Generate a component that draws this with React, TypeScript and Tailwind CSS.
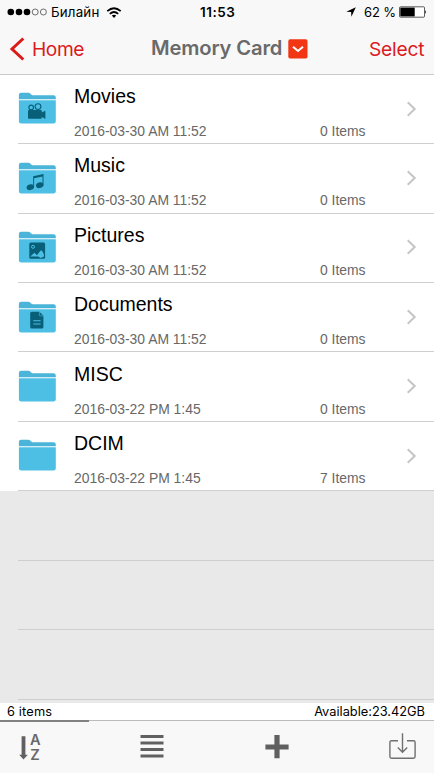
import React from 'react';

type Kind = 'movie' | 'music' | 'picture' | 'document' | 'plain';

interface Entry {
  name: string;
  date: string;
  count: string;
  kind: Kind;
}

const entries: Entry[] = [
  { name: 'Movies', date: '2016-03-30 AM 11:52', count: '0 Items', kind: 'movie' },
  { name: 'Music', date: '2016-03-30 AM 11:52', count: '0 Items', kind: 'music' },
  { name: 'Pictures', date: '2016-03-30 AM 11:52', count: '0 Items', kind: 'picture' },
  { name: 'Documents', date: '2016-03-30 AM 11:52', count: '0 Items', kind: 'document' },
  { name: 'MISC', date: '2016-03-22 PM 1:45', count: '0 Items', kind: 'plain' },
  { name: 'DCIM', date: '2016-03-22 PM 1:45', count: '7 Items', kind: 'plain' },
];

function Glyph({ kind }: { kind: Kind }) {
  const dark = '#075f78';
  if (kind === 'movie') {
    return (
      <g>
        <circle cx="13.2" cy="15.4" r="2.3" fill="none" stroke={dark} strokeWidth="1.1" />
        <circle cx="20" cy="14.6" r="2.9" fill="none" stroke={dark} strokeWidth="1.1" />
        <rect x="10" y="18" width="13.8" height="8.8" rx="1" fill={dark} />
        <path d="M23 20.8 L27.4 18.8 V27 L23 24.6 Z" fill={dark} />
      </g>
    );
  }
  if (kind === 'music') {
    return (
      <g fill={dark}>
        <ellipse cx="12.3" cy="25.2" rx="3.8" ry="2.8" transform="rotate(-20 12.3 25.2)" />
        <ellipse cx="21.7" cy="23.2" rx="3.8" ry="2.8" transform="rotate(-20 21.7 23.2)" />
        <path d="M15.2 25 V14.2 L25.5 12 V23.2 H24.5 V14.4 L16.1 16.2 V25 Z" />
      </g>
    );
  }
  if (kind === 'picture') {
    return (
      <g>
        <rect x="11.3" y="11.5" width="15.8" height="16.2" rx="1.5" fill={dark} />
        <circle cx="15" cy="15.8" r="1.5" fill="none" stroke="#4ebfe4" strokeWidth="1" />
        <path d="M12.2 25.6 L16.4 21.8 L19 24.2 L22.4 19.8 Q24 18.6 24.7 21 Q26 22 26 25.6 L22.7 27 L20.3 25.6 Z" fill="#4ebfe4" />
      </g>
    );
  }
  if (kind === 'document') {
    return (
      <g>
        <path d="M13.7 10.8 H21.4 L25.4 14.8 V26 Q25.4 27.5 23.9 27.5 H13.7 Q12.2 27.5 12.2 26 V12.3 Q12.2 10.8 13.7 10.8 Z" fill={dark} />
        <path d="M21.4 11 V14.8 H25.2" fill="none" stroke="#4ebfe4" strokeWidth="0.6" />
        <path d="M15.3 19.7 H22.6 M15.3 23 H22.6" stroke="#4ebfe4" strokeWidth="1.1" />
      </g>
    );
  }
  return null;
}

function Folder({ kind }: { kind: Kind }) {
  return (
    <svg className="h-8 w-[38px] shrink-0" viewBox="0 0 38 32">
      <path d="M0.9 7.2 V2.8 Q0.9 0.7 3 0.7 H10.5 Q12 0.7 13 2.2 Q13.7 3.2 15 3.2 H35.5 Q37.8 3.2 37.8 5.5 V7.2 Z" fill="#4bb5d9" />
      <path d="M0.9 8.2 H37.8 V29 Q37.8 31.5 35.3 31.5 H3.4 Q0.9 31.5 0.9 29 Z" fill="#4ebfe4" />
      <Glyph kind={kind} />
    </svg>
  );
}

function Row({ entry }: { entry: Entry }) {
  return (
    <li className="flex h-[69.45px] pl-[18px]">
      <div className="flex flex-1 border-b border-[#cfcfcf]">
        <div className="pt-[17.6px]"><Folder kind={entry.kind} /></div>
        <div className="ml-[18px] w-[246px]">
          <div className="mt-[9.2px] text-[19.5px] leading-6 text-black">{entry.name}</div>
          <div className="mt-[15.1px] text-[13.9px] leading-4 text-[#686868]">{entry.date}</div>
        </div>
        <div className="mt-[48.3px] w-[83px] text-[13.9px] leading-4 text-[#686868]">{entry.count}</div>
        <svg className="mt-[24.8px] h-[18px] w-[14px]" viewBox="0 0 14 18">
          <path d="M4.7 2.2 L11.7 9 L4.7 15.8" fill="none" stroke="#c5c5c5" strokeWidth="2" />
        </svg>
      </div>
    </li>
  );
}

function StatusBar() {
  return (
    <div className="flex h-6 items-center text-black">
      <svg className="ml-[7px] h-3 w-10" viewBox="0 0 40 12">
        <circle cx="3.8" cy="6" r="3.3" />
        <circle cx="12" cy="6" r="3.3" />
        <circle cx="20" cy="6" r="3.3" />
        <circle cx="28.2" cy="6" r="3" fill="none" stroke="#333" strokeWidth="0.7" />
        <circle cx="36.4" cy="6" r="3" fill="none" stroke="#333" strokeWidth="0.7" />
      </svg>
      <div className="ml-[4px] w-[55px] whitespace-nowrap pt-px text-[13.3px] tracking-[0.2px]">Билайн</div>
      <svg className="h-[11px] w-4" viewBox="0 0 16 11">
        <g fill="none" stroke="#000" strokeWidth="1.8">
          <path d="M1.3 4.2 Q8 -1.8 14.7 4.2" />
          <path d="M3.8 6.9 Q8 3.1 12.2 6.9" />
        </g>
        <path d="M5.8 8.6 Q8 6.8 10.2 8.6 L8 10.9 Z" />
      </svg>
      <div className="ml-[78px] w-[146px] pt-px text-[13.5px] font-semibold tracking-[0.5px]">11:53</div>
      <svg className="h-[10px] w-[10px]" viewBox="0 0 10 10">
        <path d="M9.8 0.3 L5.4 9.8 L5.1 5 L0.3 4.8 Z" />
      </svg>
      <div className="ml-[8px] w-[35px] whitespace-nowrap pt-px text-[13px] tracking-[-0.1px]">62 %</div>
      <svg className="h-3 w-7" viewBox="0 0 28 12">
        <rect x="0.5" y="0.8" width="25" height="10.4" rx="1" fill="white" stroke="#333" strokeWidth="0.8" />
        <rect x="1.3" y="1.6" width="14.4" height="8.8" />
        <path d="M26.2 4 Q28 6 26.2 8 Z" />
      </svg>
    </div>
  );
}

function NavBar() {
  return (
    <div className="flex h-[50px] items-center">
      <svg className="ml-[9px] h-6 w-4" viewBox="0 0 16 24">
        <path d="M14.3 1.5 L3 12 L14.3 22.5" fill="none" stroke="#dc1a18" strokeWidth="3" />
      </svg>
      <div className="ml-[7px] w-[119px] text-[19.2px] tracking-[-0.4px] text-[#dc1a22]">Home</div>
      <div className="w-[137px] whitespace-nowrap pb-px text-[20.2px] font-semibold tracking-[-0.15px] text-[#6a6a6a]">Memory Card</div>
      <svg className="h-5 w-5" viewBox="0 0 20 20">
        <rect x="0.3" y="0.3" width="19.2" height="19.2" rx="1.8" fill="#f23513" />
        <path d="M5 7.7 L10 12 L15 7.7" fill="none" stroke="white" strokeWidth="2" />
      </svg>
      <div className="ml-[61px] text-[19.2px] tracking-[-0.2px] text-[#dc1a22]">Select</div>
    </div>
  );
}

function Toolbar() {
  return (
    <div className="flex h-[51px] bg-[#f8f8f8] pt-[11px]">
      <div className="ml-[19px] flex w-[121px]">
        <svg className="h-[27px] w-[10px]" viewBox="0 0 10 27">
          <path d="M2.6 3.2 H6.4 V21.8 H8.8 L4.5 26.4 L0.2 21.8 H2.6 Z" fill="#606060" />
        </svg>
        <svg className="h-7 w-3 overflow-visible" viewBox="0 0 12 28">
          <text x="0.9" y="12" fontSize="14.6" fontWeight="600" fill="#686868">A</text>
          <text x="1.2" y="26.6" fontSize="14.6" fontWeight="600" fill="#686868">Z</text>
        </svg>
      </div>
      <svg className="h-7 w-6" viewBox="0 0 24 28">
        <path d="M0.5 3.5 H23.5 M0.5 9.9 H23.5 M0.5 16.5 H23.5 M0.5 23 H23.5" stroke="#606060" strokeWidth="3" />
      </svg>
      <svg className="ml-[101px] h-7 w-6" viewBox="0 0 24 28">
        <path d="M12 2 V25.3 M0.4 14 H23.6" stroke="#606060" strokeWidth="5.2" />
      </svg>
      <svg className="ml-[100px] h-7 w-[27px]" viewBox="0 0 27 28">
        <g fill="none" stroke="#707070" strokeWidth="1.4">
          <path d="M9 7.8 H2.5 Q0.9 7.8 0.9 9.4 V23.6 Q0.9 25.2 2.5 25.2 H24.5 Q26.1 25.2 26.1 23.6 V9.4 Q26.1 7.8 24.5 7.8 H18" />
          <path d="M13.5 0.2 V19 M8.8 14.5 L13.5 19.2 L18.2 14.5" />
        </g>
      </svg>
    </div>
  );
}

export default function App() {
  return (
    <div className="flex h-[773px] w-[434px] flex-col overflow-hidden bg-white font-['Inter',sans-serif]">
      <header className="h-[75px] shrink-0 border-b border-[#c9c9c9] bg-[#f8f8f8]">
        <StatusBar />
        <NavBar />
      </header>
      <main className="h-[628px] shrink-0 overflow-hidden bg-[#e9e9e9] font-['Liberation_Sans',Arial,sans-serif]">
        <ul className="-mt-[0.3px] bg-white">
          {entries.map((e) => <Row key={e.name} entry={e} />)}
        </ul>
        <div className="pl-[18px]">
          <div className="h-[69.45px] border-b border-[#cfcfcf]" />
          <div className="h-[69.45px] border-b border-[#cfcfcf]" />
          <div className="h-[69.45px] border-b border-[#cfcfcf]" />
        </div>
      </main>
      <div className="flex h-4 shrink-0 items-center justify-between pl-[7px] pr-[9px] pt-[2px] text-[12.8px] text-black">
        <span className="tracking-[0.15px]">6 items</span>
        <span className="tracking-[0px]">Available:23.42GB</span>
      </div>
      <div className="flex h-[3px] shrink-0 items-end bg-white">
        <div className="h-0.5 w-[89px] bg-[#818181]" />
        <div className="h-0.5 flex-1 border-t border-[#bcbcbc] bg-[#f8f8f8]" />
      </div>
      <Toolbar />
    </div>
  );
}
